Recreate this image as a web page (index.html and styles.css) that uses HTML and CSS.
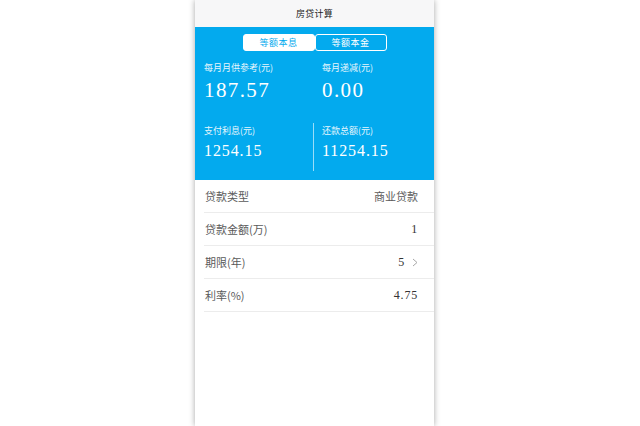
FILE: index.html
```html
<!DOCTYPE html>
<html lang="zh">
<head>
<meta charset="utf-8">
<title>房贷计算</title>
<link rel="stylesheet" href="styles.css">
</head>
<body>
<div class="stage">
  <div class="phone">
    <header class="topbar">房贷计算</header>
    <section class="summary">
      <div class="tabs">
        <div class="tab tab-active">等额本息</div>
        <div class="tab tab-idle">等额本金</div>
      </div>
      <div class="stats stats-top">
        <div class="stat stat-first">
          <div class="stat-label">每月月供参考(元)</div>
          <div class="stat-big">187.57</div>
        </div>
        <div class="stat">
          <div class="stat-label">每月递减(元)</div>
          <div class="stat-big">0.00</div>
        </div>
      </div>
      <div class="stats stats-bottom">
        <div class="stat stat-first">
          <div class="stat-label">支付利息(元)</div>
          <div class="stat-mid">1254.15</div>
        </div>
        <div class="stat stat-divided">
          <div class="stat-label">还款总额(元)</div>
          <div class="stat-mid">11254.15</div>
        </div>
      </div>
    </section>
    <ul class="form">
      <li class="row"><span class="row-label">贷款类型</span><span class="row-value">商业贷款</span></li>
      <li class="row"><span class="row-label">贷款金额(万)</span><span class="row-value num">1</span></li>
      <li class="row"><span class="row-label">期限(年)</span><span class="row-value num">5<svg class="chev" width="6" height="9" viewBox="0 0 6 9"><path d="M1 1 L5 4.5 L1 8" fill="none" stroke="#a8a8a8" stroke-width="1"/></svg></span></li>
      <li class="row"><span class="row-label">利率(%)</span><span class="row-value num">4.75</span></li>
    </ul>
  </div>
</div>
</body>
</html>
```
FILE: styles.css
```css
* { box-sizing: border-box; }
html, body { margin: 0; padding: 0; background: #fff; }
body { font-family: "Noto Sans CJK SC", "Noto Sans", sans-serif; }
.stage {
  display: flex;
  justify-content: center;
  padding-right: 11px;
  min-height: 426px;
}
.phone {
  width: 239px;
  min-height: 426px;
  background: #fff;
  box-shadow: 0 0 6px rgba(0,0,0,0.35);
}
.topbar {
  height: 27px;
  line-height: 27px;
  background: #f7f7f8;
  text-align: center;
  font-size: 9px;
  color: #222;
  letter-spacing: 0.3px;
}
.summary {
  background: #03aaee;
  color: #fff;
  padding: 7px 0 9px;
}
.tabs {
  display: flex;
  justify-content: center;
}
.tab {
  width: 72px;
  height: 17px;
  line-height: 15px;
  font-size: 9px;
  text-align: center;
  border: 1px solid #fff;
  letter-spacing: 0.5px;
  border-radius: 3px;
}
.tab-active {
  background: #fff;
  color: #03aaee;
}
.tab-idle {
  color: #fff;
}
.stats { display: flex; }
.stat { flex: 1; padding-left: 9px; }
.stat-first { flex: 0 0 118px; }
.stats-top { padding-top: 11px; }
.stats-bottom { padding-top: 19px; }
.stats-bottom .stat { padding-top: 2px; height: 48px; }
.stat-divided { border-left: 1px solid rgba(255,255,255,0.6); padding-left: 8px; }
.stat-label {
  font-size: 9px;
  line-height: 12px;
  color: #e6f6fd;
}
.stat-big {
  font-family: "Liberation Serif", serif;
  font-size: 21px;
  line-height: 28px;
  margin-top: 2px;
  letter-spacing: 1.4px;
}
.stat-mid {
  font-family: "Liberation Serif", serif;
  font-size: 16px;
  line-height: 22px;
  margin-top: 3px;
  letter-spacing: 0.9px;
}
.form {
  list-style: none;
  margin: 0;
  padding: 0 0 0 9px;
}
.row {
  display: flex;
  align-items: center;
  justify-content: space-between;
  height: 33px;
  border-bottom: 1px solid #ececec;
  padding-right: 16px;
  font-size: 11px;
  color: #5a5a5a;
}
.row-label { padding-left: 1px; }
.row-value { display: flex; align-items: center; color: #5a5a5a; }
.num {
  font-family: "Liberation Serif", serif;
  font-size: 12px;
  color: #333;
  letter-spacing: 0.8px;
}
.chev { margin-left: 7px; }
```
